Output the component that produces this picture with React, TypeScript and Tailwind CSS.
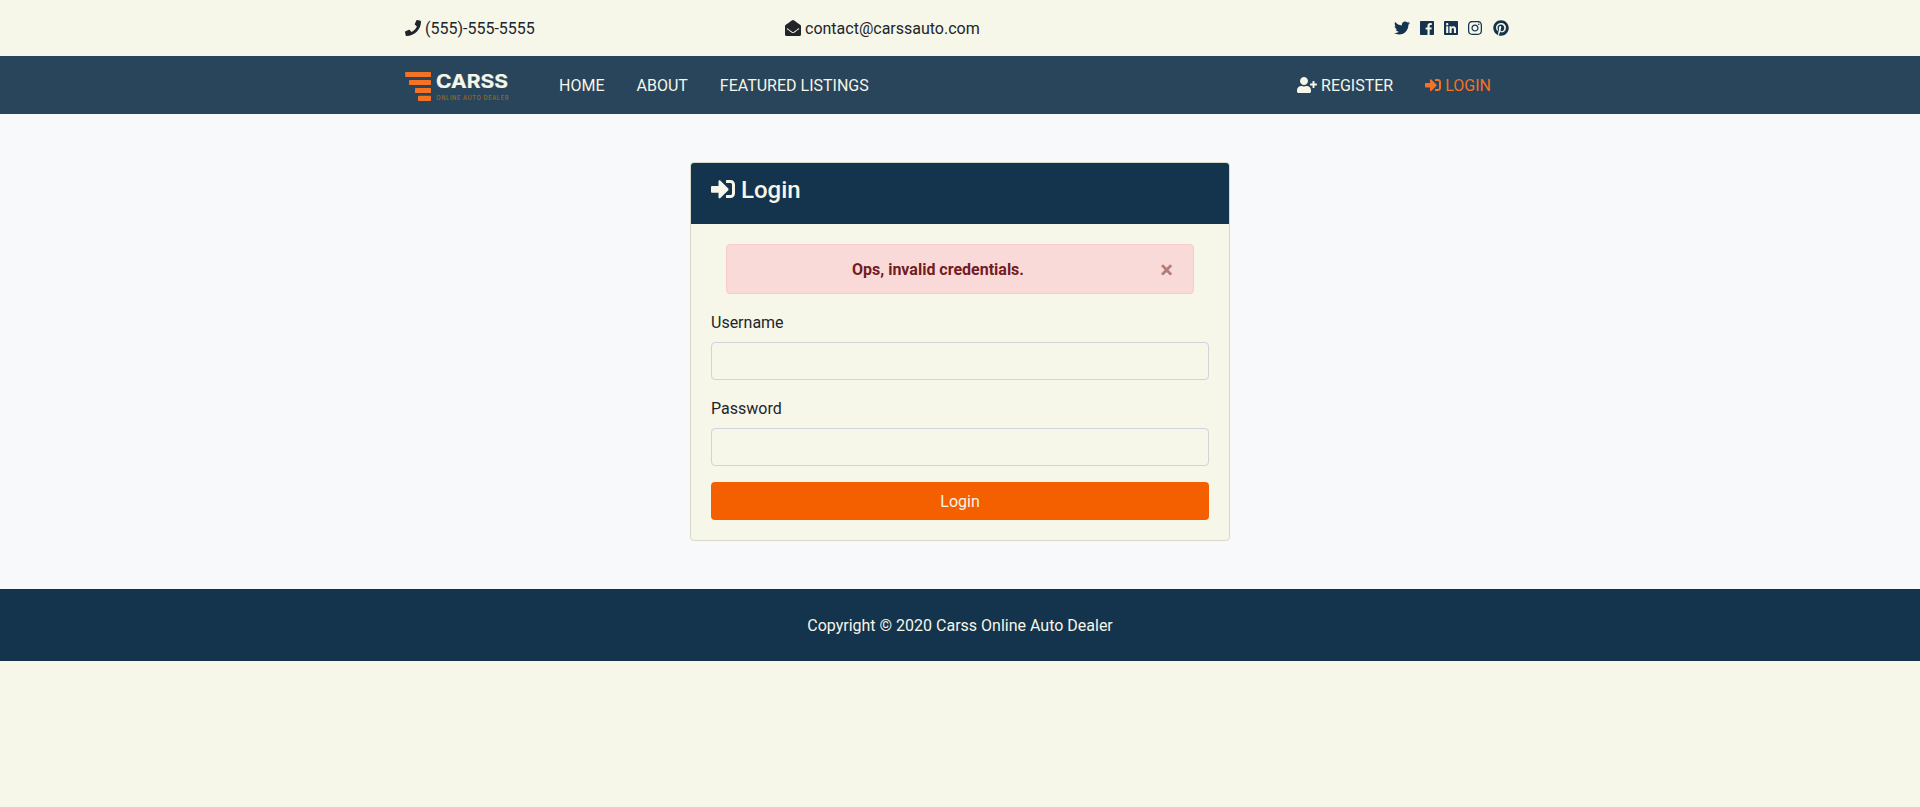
import React, { useState } from 'react';
import {
  FaPhone,
  FaEnvelopeOpen,
  FaTwitter,
  FaLinkedin,
  FaInstagram,
  FaPinterest,
  FaUserPlus,
  FaSignInAlt,
} from 'react-icons/fa';

function FacebookIcon() {
  return (
    <svg viewBox="0 0 448 512" className="h-4 w-[14px]" fill="currentColor" aria-label="Facebook">
      <path d="M448 56.700v398.500c0 13.700-11.100 24.700-24.700 24.700H309.100V306.500h58.200l8.700-67.600h-67v-43.200c0-19.600 5.400-32.900 33.500-32.900h35.800v-60.500c-6.200-.8-27.400-2.700-52.200-2.700-51.600 0-87 31.500-87 89.400v49.900h-58.400v67.600h58.400V480H24.700C11.100 480 0 468.900 0 455.300V56.700C0 43.100 11.100 32 24.700 32h398.500c13.700 0 24.800 11.100 24.800 24.700z" />
    </svg>
  );
}

function Logo() {
  return (
    <svg width="106" height="34" viewBox="0 0 106 34" aria-label="Carss Online Auto Dealer">
      <g fill="#f47224">
        <rect x="0.200" y="3" width="25.800" height="5.100" rx="0.700" />
        <rect x="4" y="11" width="22" height="5.100" rx="0.700" />
        <rect x="10" y="19" width="16" height="5.100" rx="0.700" />
        <rect x="13" y="26.800" width="13" height="5.100" rx="0.700" />
      </g>
      <text x="31" y="19" fontSize="18.800" fontWeight="700" fill="#f6f6e9" stroke="#f6f6e9" strokeWidth="0.200" fontFamily="Inter, sans-serif" textLength="72" lengthAdjust="spacingAndGlyphs">CARSS</text>
      <text x="31.300" y="30.700" fontSize="5.600" fontWeight="600" fill="#966628" fontFamily="Inter, sans-serif" textLength="72" lengthAdjust="spacing">ONLINE AUTO DEALER</text>
    </svg>
  );
}

function TopBar() {
  return (
    <section className="h-14 pt-[17px] text-[#212529]">
      <div className="mx-auto grid w-[1140px] grid-cols-3">
        <div className="px-[15px]">
          <FaPhone className="mr-1 inline-block h-4 w-4 align-[-2px]" />
          (555)-555-5555
        </div>
        <div className="px-[15px]">
          <FaEnvelopeOpen className="mr-1 inline-block h-4 w-4 align-[-2px]" />
          contact@carssauto.com
        </div>
        <div className="flex items-start justify-end gap-[10.250px] pt-[3px] pr-[21.300px] text-[#14334c]">
          <FaTwitter className="h-4 w-4" />
          <FacebookIcon />
          <FaLinkedin className="h-4 w-[14px]" />
          <FaInstagram className="h-4 w-[14px]" />
          <FaPinterest className="h-4 w-4" />
        </div>
      </div>
    </section>
  );
}

function NavBar() {
  return (
    <nav className="h-[58px] bg-[#28455b] pt-0.5 text-[#f6f6e9]">
      <div className="mx-auto flex h-full w-[1110px] items-center">
        <a href="#"><Logo /></a>
        <div className="ml-12 flex gap-8">
          <a href="#">HOME</a>
          <a href="#">ABOUT</a>
          <a href="#">FEATURED LISTINGS</a>
        </div>
        <div className="ml-auto flex gap-8 pr-6">
          <a href="#">
            <FaUserPlus className="mr-1 inline-block h-4 w-5 align-[-2px]" />
            REGISTER
          </a>
          <a href="#" className="text-[#f47224]">
            <FaSignInAlt className="mr-1 inline-block h-4 w-4 align-[-2px]" />
            LOGIN
          </a>
        </div>
      </div>
    </nav>
  );
}

function Field({ label, type }: { label: string; type: string }) {
  return (
    <div className="mb-4">
      <label htmlFor={type} className="mb-[7px] block pt-px">{label}</label>
      <input
        id={type}
        type={type}
        className="block h-[38px] w-full rounded border border-[#ced4da] bg-transparent px-3 py-1.5"
      />
    </div>
  );
}

export default function App() {
  const [alertOpen, setAlertOpen] = useState(true);
  return (
    <div className="min-h-screen bg-[#f6f6e9] font-[Roboto,sans-serif] text-base text-[#212529]">
      <TopBar />
      <NavBar />
      <main className="bg-[#f8f9fb] py-12">
        <div className="mx-auto w-[540px] rounded border border-[#d7d8ca] bg-[#f6f6e9]">
          <div className="h-[61px] rounded-t-[3px] bg-[#14334c] px-5 pt-[13px] text-[#f6f6e9]">
            <h4 className="text-2xl leading-[28.8px] font-medium">
              <FaSignInAlt className="mr-[6px] inline-block h-6 w-6 align-[-3px]" />
              Login
            </h4>
          </div>
          <div className="p-5">
            {alertOpen && (
              <div className="relative mx-[15px] mb-4 rounded border border-[#f7cacc] bg-[#fadad8] pt-[13px] pr-16 pb-[11px] pl-5 text-center text-[#721c24]">
                <strong className="font-bold">Ops, invalid credentials.</strong>
                <button
                  type="button"
                  aria-label="Close"
                  onClick={() => setAlertOpen(false)}
                  className="absolute top-0 right-0 px-5 pt-[13px] pb-[11px] text-2xl leading-6 font-bold opacity-50 [text-shadow:0_1px_0_#fff]"
                >
                  ×
                </button>
              </div>
            )}
            <form onSubmit={(event) => event.preventDefault()}>
              <Field label="Username" type="text" />
              <Field label="Password" type="password" />
              <button type="submit" className="block h-[38px] w-full rounded bg-[#f46000] pt-0.5 text-[#f6f6e9]">
                Login
              </button>
            </form>
          </div>
        </div>
      </main>
      <footer className="bg-[#14334c] pt-[25px] pb-[23px] text-center text-[#f6f6e9]">
        Copyright © 2020 Carss Online Auto Dealer
      </footer>
    </div>
  );
}
